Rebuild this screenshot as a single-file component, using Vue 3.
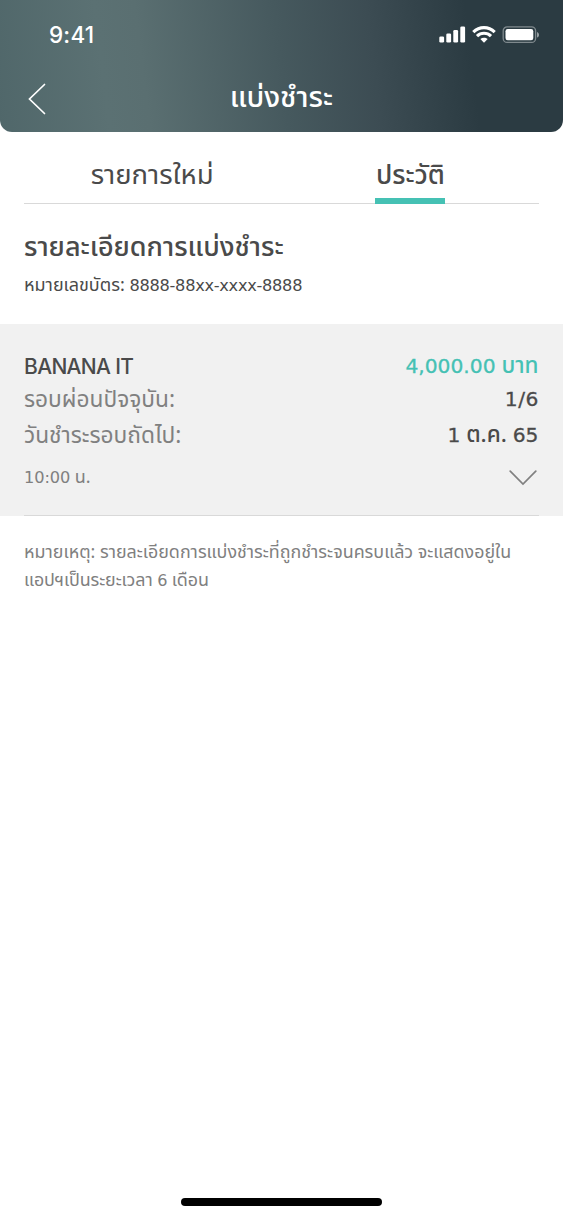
<template>
  <main class="screen">
    <header class="header">
      <div class="status">
        <span class="t clock">9:41</span>
        <svg class="signals" width="100" height="18" viewBox="0 0 100 18" fill="#fff">
          <rect x=".3" y="10.5" width="4.8" height="6" rx="1.3" />
          <rect x="7.3" y="7.5" width="4.8" height="9" rx="1.3" />
          <rect x="14.3" y="4" width="4.8" height="12.5" rx="1.3" />
          <rect x="21.3" y=".5" width="4.8" height="16" rx="1.3" />
          <g fill="none" stroke="#fff" stroke-width="3.2">
            <path d="M34.3 6.1C40.5.2 49.5.2 55.7 6.1" />
            <path d="M38 10.1c4-3.8 10-3.8 14 0" />
          </g>
          <path d="M41.3 13.1c2.2-1.9 5.2-1.9 7.4 0L45 16.8z" />
          <rect x="64.2" y=".8" width="32.4" height="15.6" rx="4" fill="none" stroke="#fff" stroke-opacity=".4" stroke-width="1.3" />
          <rect x="66.5" y="3" width="27.8" height="11.2" rx="2.2" />
          <path d="M98 6c2.7 1.2 2.7 4.4 0 5.6z" opacity=".5" />
        </svg>
      </div>
      <div class="nav">
        <svg class="back" width="20" height="34" viewBox="0 0 20 34"><path d="M17.5 2.5 2.5 17l15 14.5" /></svg>
        <h1 class="t title">แบ่งชำระ</h1>
      </div>
    </header>
    <nav class="tabs">
      <div class="tab"><span class="t tab-new">รายการใหม่</span></div>
      <div class="tab active"><span class="t tab-history">ประวัติ</span></div>
    </nav>
    <section class="intro">
      <h2 class="t heading">รายละเอียดการแบ่งชำระ</h2>
      <p class="card-no"><span class="t">หมายเลขบัตร: </span><span class="t num">8888-88xx-xxxx-8888</span></p>
    </section>
    <section class="item">
      <div class="row first"><span class="t merchant">BANANA IT</span><span class="t amount"><span class="digits">4,000.00</span> บาท</span></div>
      <div class="row second"><span class="t label">รอบผ่อนปัจจุบัน:</span><span class="t value"><span class="digits round">1/6</span></span></div>
      <div class="row third"><span class="t label">วันชำระรอบถัดไป:</span><span class="t value"><span class="digits">1</span> ต.ค. <span class="digits">65</span></span></div>
      <div class="row fourth"><span class="t time"><span class="digits">10:00</span> น.</span>
        <svg class="chev" width="30" height="18" viewBox="0 0 30 18"><path d="M1.2 2.2 14 15 26.8 2.2" /></svg>
      </div>
      <div class="divider"></div>
    </section>
    <p class="note"><span class="t">หมายเหตุ: รายละเอียดการแบ่งชำระที่ถูกชำระจนครบแล้ว จะแสดงอยู่ใน</span><br /><span class="t last">แอปฯเป็นระยะเวลา <span class="digits">6</span> เดือน</span></p>
    <div class="home"></div>
  </main>
</template>

<script setup>
</script>

<style>
body { background: #fff; }
</style>
<style scoped>
* { box-sizing: border-box; margin: 0; }
.screen { display: flex; flex-direction: column; width: 562.5px; height: 1219px; background: #fff; color: #4a4a4a; font-family: "Noto Sans Thai", "Noto Sans", sans-serif; }
.t { white-space: pre; }
.header { height: 132px; flex: none; border-radius: 0 0 12px 12px; background: linear-gradient(83deg, #50676a 0%, #5b7173 19%, #5a6f71 26%, #46595e 50%, #3c4c53 66%, #2b3b42 83%, #2b3b42 100%); color: #fff; }
.status { display: flex; justify-content: space-between; height: 66px; padding: 26px 23.5px 0 49px; }
.clock { font: 500 22.5px/17px Inter, sans-serif; letter-spacing: .2px; }
.nav { display: grid; grid-template-columns: 1fr auto 1fr; align-items: center; height: 66px; padding: 0 27px; }
.back, .chev { fill: none; stroke: #fff; stroke-width: 1.7; stroke-linecap: round; }
.title { font-size: 29px; font-weight: 500; line-height: 40px; padding-bottom: 2px; }
.tabs { display: flex; height: 72px; margin: 0 24px; flex: none; border-bottom: 1.5px solid #d9d9d9; }
.tab { flex: 1; text-align: center; padding-top: 20.5px; font-size: 27.5px; line-height: 46px; }
.active { font-weight: 500; font-size: 26.6px; padding-left: 2px; }
.active .t { display: inline-block; height: 51.5px; padding: 0 .5px; border-bottom: 6px solid #45c1b4; }
.intro { height: 120px; flex: none; padding: 25px 24px 0; }
.heading { font-size: 27px; font-weight: 500; line-height: 38px; }
.card-no { font-size: 18px; line-height: 38px; }
.num, .digits { font-family: "DejaVu Sans", sans-serif; font-size: .9em; }
.num { letter-spacing: -.28px; }
.item { display: flex; flex-direction: column; height: 192px; flex: none; background: #f1f1f1; padding: 24px 24px 0; }
.row { display: flex; justify-content: space-between; height: 36px; line-height: 36px; }
.first { height: 34px; }
.merchant { font: 500 21px/37px Inter, sans-serif; letter-spacing: -.65px; }
.amount, .value { font-size: 22.5px; font-weight: 500; }
.value { line-height: 35px; }
.amount .digits, .value .digits { -webkit-text-stroke: .3px currentColor; }
.value .round { letter-spacing: .6px; margin-right: -.6px; }
.amount { color: #45c1b4; }
.label { color: #808080; font-size: 22.7px; }
.fourth { height: 48px; align-items: center; line-height: 48px; }
.time { font-size: 18px; color: #808080; letter-spacing: -.1px; }
.chev { stroke: #808080; }
.divider { height: 1.5px; margin-top: auto; background: #d9d9d9; }
.note { color: #808080; padding: 23px 24px; font-size: 17.9px; line-height: 28.4px; }
.last { letter-spacing: -.1px; }
.home { width: 201px; height: 8px; border-radius: 4px; background: #000; margin: auto 180.5px 13px auto; }
</style>
